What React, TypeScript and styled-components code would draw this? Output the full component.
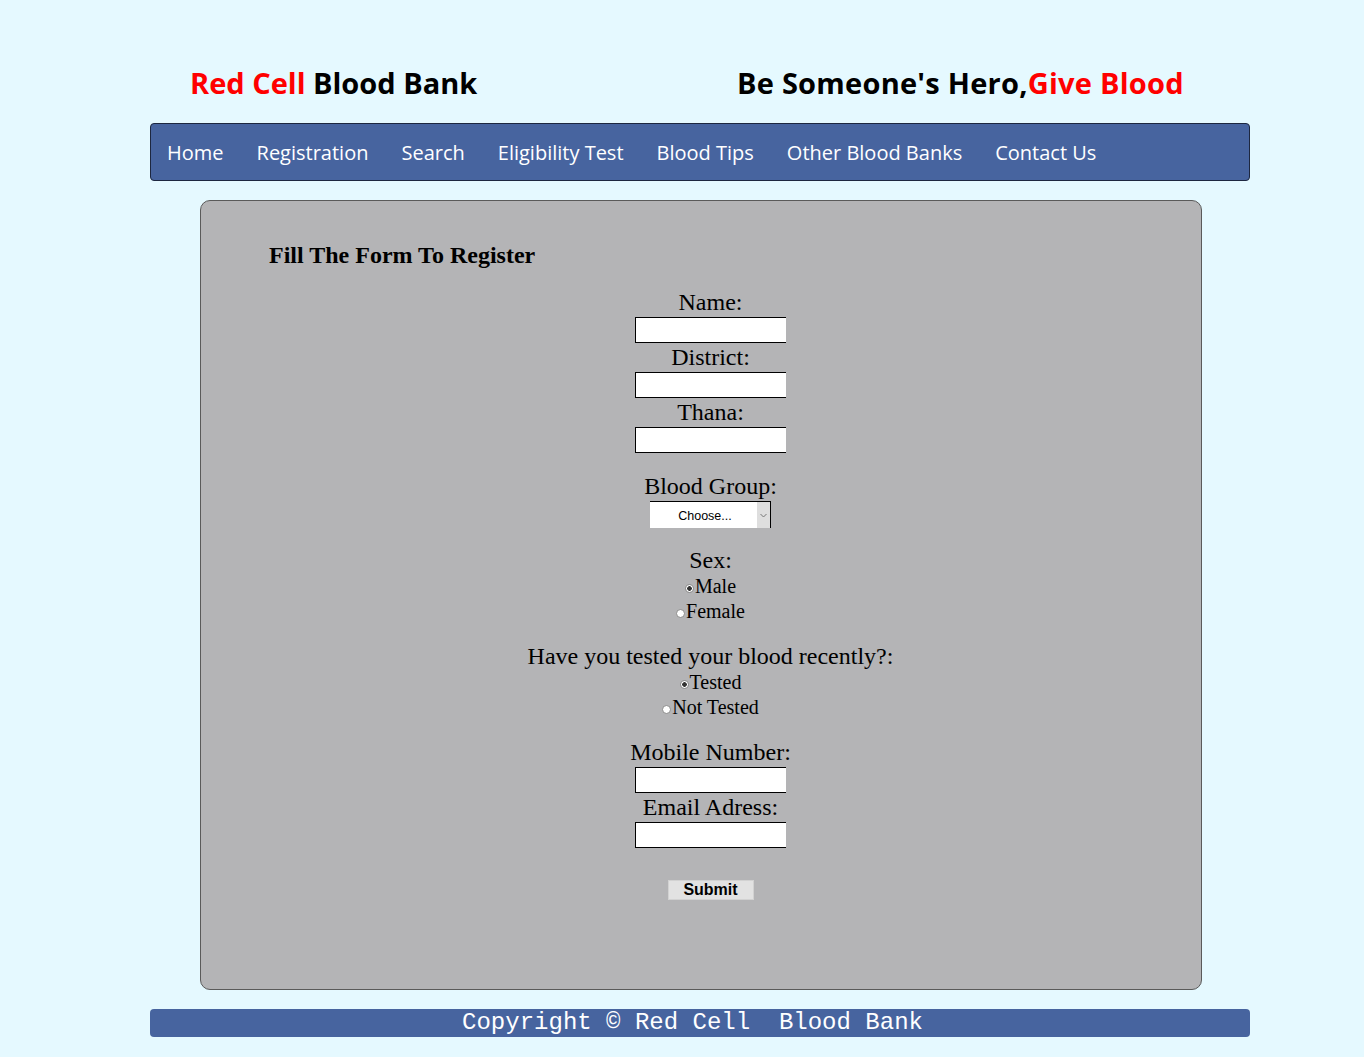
import React from "react";
import styled, { createGlobalStyle } from "styled-components";

const GlobalStyle = createGlobalStyle`
  html, body { margin: 0; padding: 0; background: #e5f9ff; }
  body { font-family: "Liberation Serif", "Times New Roman", serif; color: #000; }
  * { box-sizing: border-box; }
`;

const Page = styled.div`
  width: 1100px;
  margin-left: 150px;
  padding-top: 62px;
  padding-bottom: 20px;
`;

const Header = styled.header`
  display: grid;
  grid-template-columns: 550px 550px;
  height: 42px;
  margin-bottom: 19px;
  font-family: "Open Sans", "DejaVu Sans", sans-serif;
  font-weight: 700;
  font-size: 29px;
  line-height: 42px;
  white-space: nowrap;
`;

const Brand = styled.div<{ $indent: number; $spacing?: number }>`
  padding-left: ${(p) => p.$indent}px;
  letter-spacing: ${(p) => p.$spacing ?? 0}px;
`;

const Red = styled.span`
  color: #ff0000;
`;

const Nav = styled.nav`
  display: flex;
  align-items: center;
  gap: 33px;
  height: 58px;
  padding-left: 16px;
  background: #47649f;
  border: 1px solid #1d2740;
  border-radius: 4px;
`;

const NavLink = styled.a`
  font-family: "Open Sans", "DejaVu Sans", sans-serif;
  font-size: 20px;
  color: #fff;
  text-decoration: none;
  white-space: nowrap;
`;

const Panel = styled.main`
  width: 1002px;
  height: 790px;
  margin: 19px 0 0 50px;
  padding-top: 41px;
  background: #b4b4b6;
  border: 1px solid #5a5a5a;
  border-radius: 10px;
`;

const Title = styled.h2`
  margin: 0;
  padding-left: 68px;
  font-size: 24px;
  line-height: 27px;
  font-weight: 700;
`;

const Form = styled.form`
  display: flex;
  flex-direction: column;
  align-items: center;
  margin-top: 20px;
  padding-left: 19px;
  font-size: 24px;
`;

const Section = styled.div<{ $gap?: number }>`
  display: flex;
  flex-direction: column;
  align-items: center;
  margin-top: ${(p) => p.$gap ?? 0}px;
`;

const Label = styled.label`
  display: block;
  font-size: 24px;
  line-height: 27px;
  white-space: nowrap;
`;

const TextInput = styled.input`
  display: block;
  width: 151px;
  height: 26px;
  margin: 1px 0 1px;
  padding: 0 3px;
  background: #fff;
  border: 1px solid #000;
  border-right: 0;
  font-size: 14px;
  outline: none;
`;

const SelectBox = styled.div`
  display: flex;
  width: 121px;
  height: 27px;
  margin-top: 1px;
  background: #fff;
  border-top: 1px solid #000;
  border-right: 1px solid #000;
`;

const Select = styled.select`
  appearance: none;
  -webkit-appearance: none;
  flex: 1;
  min-width: 0;
  border: 0;
  padding: 2px 0 0 3px;
  background: transparent;
  font-family: "Liberation Sans", Arial, sans-serif;
  font-size: 12.5px;
  text-align: center;
  text-align-last: center;
  color: #000;
  outline: none;
`;

const Arrow = styled.span`
  display: flex;
  align-items: center;
  justify-content: center;
  width: 13px;
  background: #dedede;
`;

const RadioRow = styled.label`
  display: block;
  font-size: 20px;
  line-height: 25px;
  white-space: nowrap;
`;

const Radio = styled.input`
  appearance: none;
  -webkit-appearance: none;
  display: inline-block;
  width: 9px;
  height: 9px;
  margin: 0 1px 0 0;
  border: 1px solid #8a8a8a;
  border-radius: 50%;
  background: #fff;
  vertical-align: baseline;
  &:checked {
    background: radial-gradient(circle, #333 0 2px, #fff 2.6px);
  }
`;

const Submit = styled.button`
  width: 86px;
  height: 20px;
  margin-top: 31px;
  padding: 0;
  background: #e2e2e2;
  border: 1px solid #d2d2d2;
  font-family: "Liberation Sans", Arial, sans-serif;
  font-size: 16px;
  font-weight: 700;
  line-height: 18px;
  color: #000;
`;

const Footer = styled.footer`
  height: 28px;
  margin-top: 19px;
  padding-right: 15px;
  background: #47649f;
  border-radius: 4px;
  color: #fff;
  font-family: "Liberation Mono", "Courier New", monospace;
  font-size: 24px;
  line-height: 28px;
  text-align: center;
  white-space: pre;
`;

const navItems = [
  "Home",
  "Registration",
  "Search",
  "Eligibility Test",
  "Blood Tips",
  "Other Blood Banks",
  "Contact Us",
];

function Field({ label }: { label: string }) {
  return (
    <Section>
      <Label>{label}</Label>
      <TextInput type="text" />
    </Section>
  );
}

export default function App() {
  return (
    <>
      <GlobalStyle />
      <Page>
        <Header>
          <Brand $indent={40}>
            <Red>Red Cell</Red> Blood Bank
          </Brand>
          <Brand $indent={37} $spacing={0.25}>
            Be Someone's Hero,<Red>Give Blood</Red>
          </Brand>
        </Header>
        <Nav>
          {navItems.map((n) => (
            <NavLink key={n} href="#">
              {n}
            </NavLink>
          ))}
        </Nav>
        <Panel>
          <Title>Fill The Form To Register</Title>
          <Form onSubmit={(e) => e.preventDefault()}>
            <Field label="Name:" />
            <Field label="District:" />
            <Field label="Thana:" />
            <Section $gap={19}>
              <Label>Blood Group:</Label>
              <SelectBox>
                <Select defaultValue="">
                  <option value="">Choose...</option>
                  <option>A+</option>
                  <option>A-</option>
                  <option>B+</option>
                  <option>B-</option>
                  <option>O+</option>
                  <option>O-</option>
                  <option>AB+</option>
                  <option>AB-</option>
                </Select>
                <Arrow>
                  <svg width="7" height="5" viewBox="0 0 7 5">
                    <path d="M0.5 1 L3.5 4 L6.5 1" fill="none" stroke="#777" strokeWidth="1" />
                  </svg>
                </Arrow>
              </SelectBox>
            </Section>
            <Section $gap={19}>
              <Label>Sex:</Label>
              <RadioRow>
                <Radio type="radio" name="sex" defaultChecked />
                Male
              </RadioRow>
              <RadioRow>
                <Radio type="radio" name="sex" />
                Female
              </RadioRow>
            </Section>
            <Section $gap={19}>
              <Label>Have you tested your blood recently?:</Label>
              <RadioRow>
                <Radio type="radio" name="tested" defaultChecked />
                Tested
              </RadioRow>
              <RadioRow>
                <Radio type="radio" name="tested" />
                Not Tested
              </RadioRow>
            </Section>
            <Section $gap={19}>
              <Label>Mobile Number:</Label>
              <TextInput type="text" />
            </Section>
            <Field label="Email Adress:" />
            <Submit type="submit">Submit</Submit>
          </Form>
        </Panel>
        <Footer>{"Copyright © Red Cell  Blood Bank"}</Footer>
      </Page>
    </>
  );
}
